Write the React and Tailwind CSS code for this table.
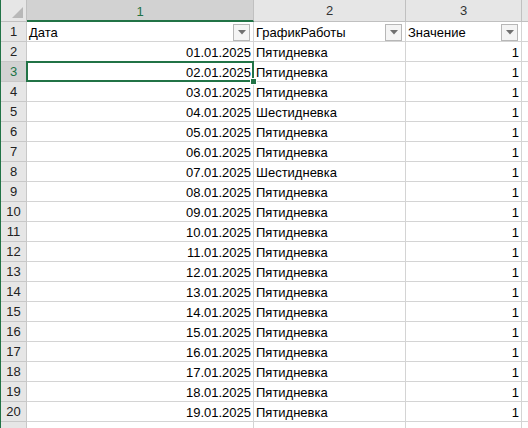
const rows = Array.from({ length: 19 }, (_, i) => {
  const d = String(i + 1).padStart(2, '0');
  return {
    date: `${d}.01.2025`,
    plan: i === 3 || i === 6 ? 'Шестидневка' : 'Пятидневка',
    value: 1,
  };
});

function FilterButton() {
  return (
    <span className="ml-auto mr-px flex h-[17px] w-[17px] shrink-0 items-center justify-center border border-[#b7b7b7] bg-[#f4f4f4]">
      <svg width="8" height="5" viewBox="0 0 8 5">
        <path d="M0 0h8L4 4.5z" fill="#707070" />
      </svg>
    </span>
  );
}

const cols = 'grid grid-cols-[1px_26px_227px_152px_116px_1fr]';

function RowHead({ n, active }) {
  return (
    <div
      className={`flex h-5 items-center justify-center border-r border-b border-[#c8c8c8] ${
        active ? 'bg-[#d2d2d2] text-[#217346]' : 'bg-[#e6e6e6] text-[#222]'
      }`}
    >
      {n}
    </div>
  );
}

function Cell({ children, className = '' }) {
  return (
    <div className={`relative flex h-5 items-center border-r border-b border-[#d4d4d4] px-[2px] pt-px ${className}`}>
      {children}
    </div>
  );
}

export default function App() {
  return (
    <div
      className="h-[428px] w-[528px] overflow-hidden bg-white text-[13px] leading-none text-black"
      style={{ fontFamily: '"Liberation Sans", Arial, sans-serif' }}
    >
      <div className={cols}>
        <div className="row-span-[30] bg-[#217346]" />
        <div className="relative h-[22px] border-r border-b border-[#c0c0c0] bg-[#e6e6e6]">
          <svg className="absolute right-[3px] bottom-[3px]" width="11" height="11" viewBox="0 0 11 11">
            <path d="M11 0v11H0z" fill="#b8b8b8" />
          </svg>
        </div>
        <div className="flex h-[22px] items-center justify-center border-r border-b-2 border-r-[#c0c0c0] border-b-[#217346] bg-[#d2d2d2] pt-[2px] text-[#217346]">
          1
        </div>
        <div className="flex h-[22px] items-center justify-center border-r border-b border-[#c0c0c0] bg-[#e6e6e6] text-[#333]">
          2
        </div>
        <div className="flex h-[22px] items-center justify-center border-r border-b border-[#c0c0c0] bg-[#e6e6e6] text-[#333]">
          3
        </div>
        <div className="h-[22px] border-b border-[#c0c0c0] bg-[#e6e6e6]" />

        {/* строка 1: заголовки таблицы */}
        <RowHead n={1} />
        <Cell>
          <span>Дата</span>
          <FilterButton />
        </Cell>
        <Cell>
          <span>ГрафикРаботы</span>
          <FilterButton />
        </Cell>
        <Cell>
          <span>Значение</span>
          <FilterButton />
        </Cell>
        <div className="h-5 border-b border-[#d4d4d4]" />

        {rows.map((r, i) => {
          const selected = i === 1;
          return [
            <RowHead key={`h${i}`} n={i + 2} active={selected} />,
            <Cell key={`d${i}`} className={`justify-end ${selected ? 'z-10' : ''}`}>
              {r.date}
              {selected && (
                <>
                  <span className="absolute -top-px -left-px -right-px -bottom-px border-2 border-[#217346]" />
                  <span className="absolute -right-[4px] -bottom-[4px] h-[7px] w-[7px] border border-white bg-[#217346]" />
                </>
              )}
            </Cell>,
            <Cell key={`p${i}`}>{r.plan}</Cell>,
            <Cell key={`v${i}`} className="justify-end">
              {r.value}
            </Cell>,
            <div key={`e${i}`} className="h-5 border-b border-[#d4d4d4]" />,
          ];
        })}

        <RowHead n="" />
        <Cell />
        <Cell />
        <Cell />
        <div className="h-5" />
      </div>
    </div>
  );
}
